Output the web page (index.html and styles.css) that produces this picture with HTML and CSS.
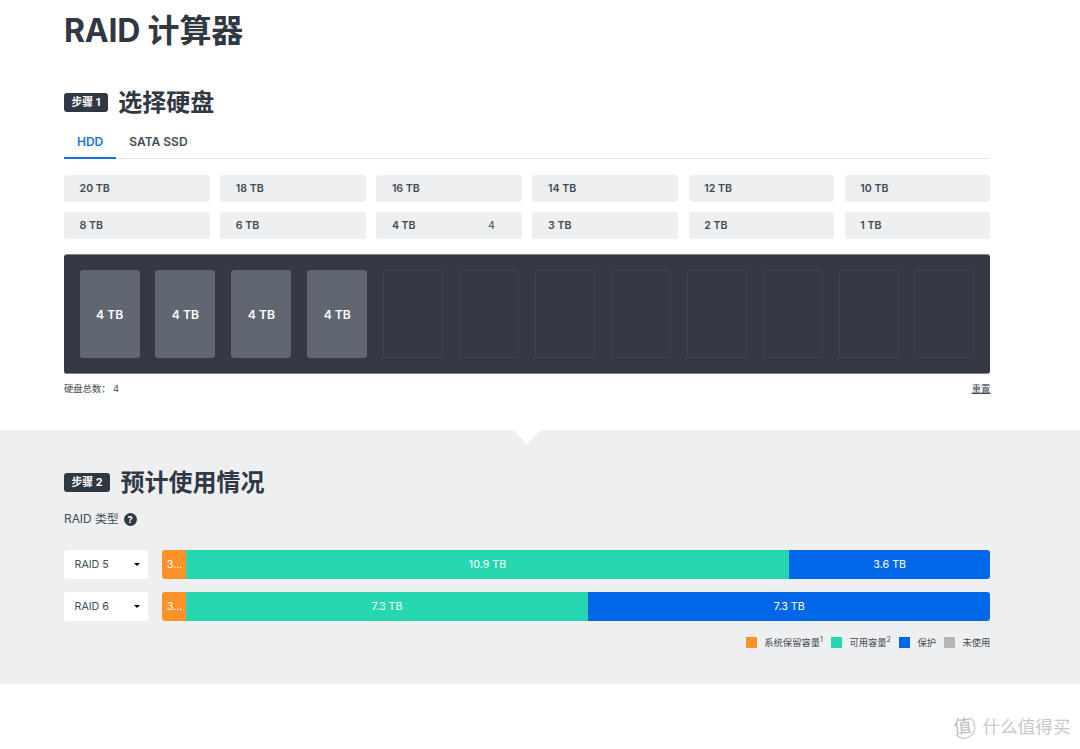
FILE: index.html
```
<!DOCTYPE html>
<html>
<head>
	<meta charset="UTF-8">
	<title>RAID 计算器</title>
	<link rel="stylesheet" href="styles.css">
</head>
<body>
	<div class="step1">
		<h1>RAID 计算器</h1>
		<div class="title">
			<span class="tag">步骤 1</span>
			<h2>选择硬盘</h2>
		</div>
		<ul class="tabs">
			<li class="active">HDD</li>
			<li>SATA SSD</li>
		</ul>
		<div class="drives">
			<p>20 TB</p>
			<p>18 TB</p>
			<p>16 TB</p>
			<p>14 TB</p>
			<p>12 TB</p>
			<p>10 TB</p>
			<p>8 TB</p>
			<p>6 TB</p>
			<p>4 TB<span>4</span></p>
			<p>3 TB</p>
			<p>2 TB</p>
			<p>1 TB</p>
		</div>
		<div class="bays">
			<div class="bay full">4 TB</div>
			<div class="bay full">4 TB</div>
			<div class="bay full">4 TB</div>
			<div class="bay full">4 TB</div>
			<div class="bay"></div>
			<div class="bay"></div>
			<div class="bay"></div>
			<div class="bay"></div>
			<div class="bay"></div>
			<div class="bay"></div>
			<div class="bay"></div>
			<div class="bay"></div>
		</div>
		<div class="total">
			<p>硬盘总数： <span>4</span></p>
			<a class="reset">重置</a>
		</div>
	</div>

	<div class="step2">
		<div class="title">
			<span class="tag">步骤 2</span>
			<h2>预计使用情况</h2>
		</div>
		<div class="type">RAID 类型 <span class="help">?</span></div>
		<div class="row">
			<div class="select">RAID 5<i></i></div>
			<div class="bar">
				<div class="system">3...</div>
				<div class="usable" style="width: 603px">10.9 TB</div>
				<div class="protect">3.6 TB</div>
			</div>
		</div>
		<div class="row">
			<div class="select">RAID 6<i></i></div>
			<div class="bar">
				<div class="system">3...</div>
				<div class="usable" style="width: 402px">7.3 TB</div>
				<div class="protect">7.3 TB</div>
			</div>
		</div>
		<ul class="legend">
			<li><i class="system"></i>系统保留容量<sup>1</sup></li>
			<li><i class="usable"></i>可用容量<sup>2</sup></li>
			<li><i class="protect"></i>保护</li>
			<li><i class="unused"></i>未使用</li>
		</ul>
	</div>

	<div class="mark">
		<svg width="24" height="24" viewBox="0 0 24 24">
			<path d="M4 19.5A10.8 10.8 0 0 0 22.8 12A10.8 10.8 0 0 0 17.5 2.6" fill="none" stroke="#cfcfcf" stroke-width="1.4"/>
			<text x="1.5" y="17.5" transform="rotate(-6 12 12)">值</text>
		</svg>
		<span>什么值得买</span>
	</div>
</body>
</html>
```
FILE: styles.css
```
*{
	margin: 0;
	padding: 0;
	box-sizing: border-box;
}
body{
	width: 1080px;
	height: 749px;
	overflow: hidden;
	background-color: #fff;
	color: #414b55;
	font-family: Inter, "Noto Sans CJK SC", sans-serif;
}
ul{
	list-style: none;
}
i{
	display: block;
}
h1{
	height: 60px;
	padding-top: 1px;
	line-height: 60px;
	font-size: 32px;
	font-weight: 700;
	letter-spacing: -0.2px;
	color: #303844;
}
h2{
	padding-top: 1px;
	font-size: 24px;
	font-weight: 700;
	color: #303844;
}
.step1{
	height: 430px;
	padding: 0 89.6px 0 64px;
}
.title{
	display: flex;
	align-items: center;
	height: 36px;
	line-height: 36px;
}
.step1 .title{
	margin-top: 24px;
}
.tag{
	height: 19px;
	margin-right: 10.5px;
	padding: 0 7.5px;
	border-radius: 3px;
	background-color: #303844;
	color: #fff;
	font-size: 10.8px;
	font-weight: 700;
	line-height: 19px;
}
.tabs{
	display: flex;
	height: 39px;
	border-bottom: 1px solid #e6e8ea;
	font-size: 12px;
	font-weight: 600;
	line-height: 43px;
	color: #414b55;
}
.tabs li{
	height: 39px;
	padding: 0 13px;
}
.tabs .active{
	border-bottom: 2px solid #1472e0;
	color: #1472e0;
}
.drives{
	display: grid;
	grid-template-columns: repeat(6, 1fr);
	gap: 10.5px;
	margin-top: 16px;
}
.drives p{
	display: flex;
	justify-content: space-between;
	height: 26.5px;
	padding: 0 27px 0 15.6px;
	border-radius: 3px;
	background-color: #eeeff1;
	font-size: 10.6px;
	font-weight: 600;
	line-height: 28px;
}
.drives span{
	font-weight: 400;
}
.bays{
	display: flex;
	justify-content: space-between;
	height: 120px;
	margin-top: 15.4px;
	padding: 15px 16px 15px 15.6px;
	border: 1px solid #80838a;
	border-width: 1px 0;
	border-radius: 3px;
	background-color: #353943;
}
.bay{
	width: 60px;
	height: 88px;
	border: 1px dotted #4b505a;
	border-radius: 3px;
}
.bays .full{
	border: 0;
	background-color: #606770;
	color: #fff;
	font-size: 12.2px;
	font-weight: 600;
	line-height: 89px;
	text-align: center;
}
.total{
	display: flex;
	justify-content: space-between;
	margin-top: 7px;
	font-size: 9.3px;
	line-height: 15px;
}
.reset{
	text-decoration: underline;
}
.step2{
	position: relative;
	height: 254px;
	padding: 34px 89.6px 0 64px;
	background-color: #eeeff1;
}
.step2:before{
	content: "";
	position: absolute;
	left: 513px;
	top: 0;
	border: 14px solid transparent;
	border-top-color: #fff;
	border-bottom: 0;
}
.type{
	display: flex;
	align-items: center;
	height: 18px;
	margin: 10px 0 22px;
	font-size: 11.9px;
	line-height: 18px;
}
.help{
	width: 13px;
	height: 13px;
	margin-left: 5px;
	border-radius: 50%;
	background-color: #303844;
	color: #fff;
	font-size: 9.5px;
	font-weight: 700;
	line-height: 13px;
	text-align: center;
}
.row{
	display: flex;
	justify-content: space-between;
	height: 29px;
	margin-bottom: 13.4px;
	font-size: 10.7px;
	line-height: 30px;
}
.select{
	display: flex;
	justify-content: space-between;
	align-items: center;
	width: 84px;
	padding: 0 8px 0 10.5px;
	border-radius: 3px;
	background-color: #fff;
}
.select i{
	border: 3px solid transparent;
	border-top-color: #000;
	border-bottom: 0;
}
.bar{
	display: flex;
	width: 828.4px;
	border-radius: 3px;
	overflow: hidden;
	color: #fff;
	text-align: center;
}
.bar .system{
	width: 24px;
	padding-left: 1px;
}
.bar .protect{
	flex: 1;
}
.system{
	background-color: #ff9129;
}
.usable{
	background-color: #26d6ae;
}
.protect{
	background-color: #0068e8;
}
.unused{
	background-color: #b5b5b5;
}
.legend{
	display: flex;
	justify-content: flex-end;
	height: 15px;
	font-size: 9.3px;
	line-height: 15px;
}
.legend li{
	display: flex;
	align-items: center;
	margin-left: 8px;
}
.legend i{
	width: 11px;
	height: 11px;
	margin-right: 7.5px;
}
.legend sup{
	height: 20px;
	font-size: 7px;
}
.mark{
	display: flex;
	align-items: center;
	justify-content: flex-end;
	height: 24px;
	margin-top: 31px;
	padding-right: 9.5px;
	color: #c8c8c8;
	font-size: 17.6px;
	line-height: 22px;
}
.mark svg{
	margin-right: 7px;
}
.mark text{
	fill: #c0c0c0;
	font-size: 18px;
}
```
